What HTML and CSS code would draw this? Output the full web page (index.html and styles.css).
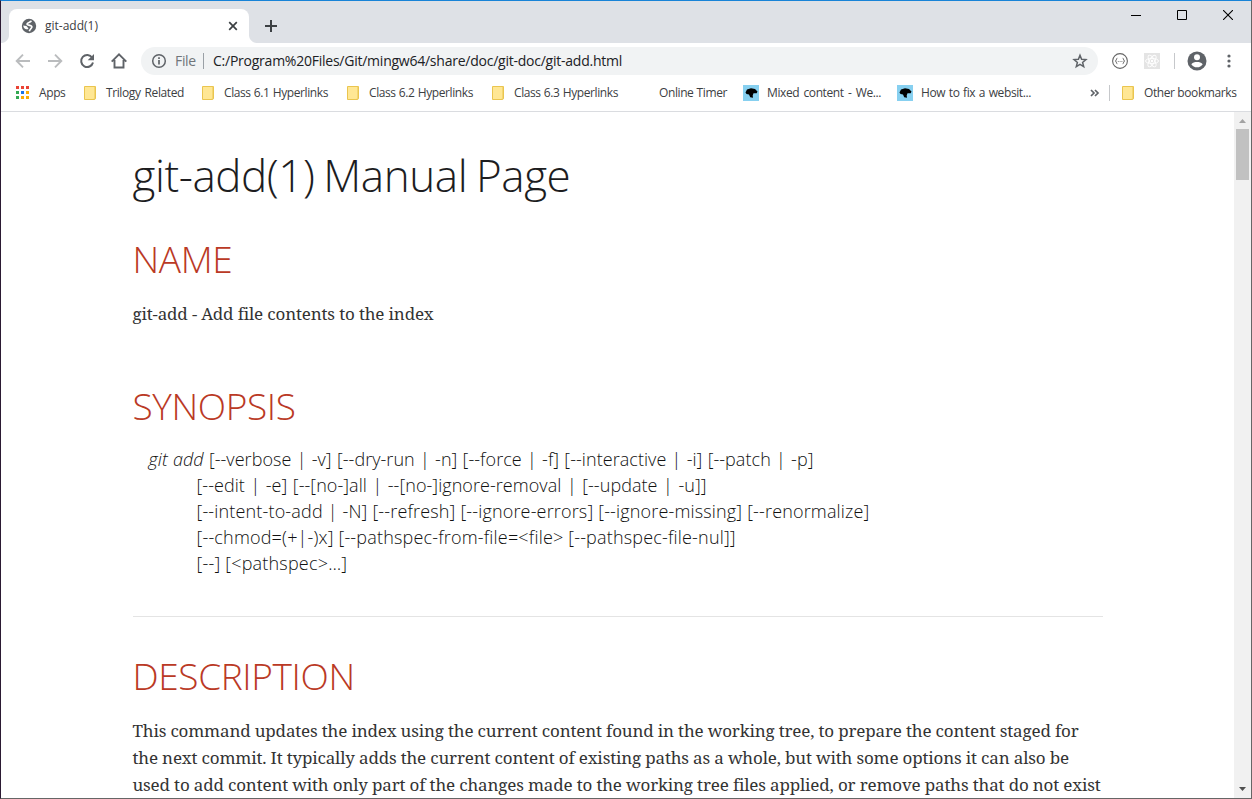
FILE: index.html
```html
<!DOCTYPE html>
<html lang="en">
<head>
<meta charset="utf-8">
<title>git-add(1)</title>
<link rel="stylesheet" href="styles.css">
</head>
<body>
<div class="window">
  <header class="tabstrip">
    <div class="tab">
      <svg class="globe" width="16" height="16" viewBox="0 0 16 16"><circle cx="8" cy="8" r="7.200" fill="#5f6368"/><path d="M10.300 2.700C9.600 4.600 6.300 4.300 6 6.100 5.900 7.300 9.800 6.800 10.800 8.400 11.500 9.800 9 10.700 8.300 13.300" fill="none" stroke="#fff" stroke-width="1.700"/><path d="M2.200 7.400 5.400 8C6.200 8.400 6.300 9.600 7.300 10L7.200 11.200C5 11.500 2.300 10.500 2.200 7.400Z" fill="#fff"/></svg>
      <span class="label tab-title">git-add(1)</span>
      <svg class="tab-close" width="16" height="16" viewBox="0 0 16 16"><path d="M4.200 4.200 11.800 11.800M11.800 4.200 4.200 11.800" stroke="#3c4043" stroke-width="1.700"/></svg>
    </div>
    <svg class="new-tab" width="14" height="14" viewBox="0 0 14 14"><path d="M7 1V13M1 7H13" stroke="#3c4043" stroke-width="2"/></svg>
    <div class="controls">
      <svg width="10" height="10" viewBox="0 0 10 10"><path d="M0 5.500H10" stroke="#000"/></svg>
      <svg width="10" height="10" viewBox="0 0 10 10"><path d="M.5.5H9.500V9.500H.5Z" fill="none" stroke="#000"/></svg>
      <svg width="10" height="10" viewBox="0 0 10 10"><path d="M0 0 10 10M10 0 0 10" stroke="#000" stroke-width="1.100"/></svg>
    </div>
  </header>

  <div class="toolbar">
    <nav class="nav">
      <svg width="16" height="16" viewBox="0 0 16 16"><path d="M15 8H2.500M8 1.700 1.700 8 8 14.300" fill="none" stroke="#babcbe" stroke-width="1.900"/></svg>
      <svg width="16" height="16" viewBox="0 0 16 16"><path d="M1 8H13.500M8 1.700 14.300 8 8 14.300" fill="none" stroke="#babcbe" stroke-width="1.900"/></svg>
      <svg width="16" height="16" viewBox="0 0 16 16"><path d="M13.200 4.700A6 6 0 1 0 14 9.500" fill="none" stroke="#5f6368" stroke-width="2"/><path d="M15 1V7.300H8.700Z" fill="#5f6368"/></svg>
      <svg width="16" height="16" viewBox="0 0 16 16"><path d="M.7 8.700 8 1.400 15.300 8.700M3.500 7V14.500H12.500V7" fill="none" stroke="#5f6368" stroke-width="1.900"/></svg>
    </nav>
    <div class="omnibox">
      <svg width="16" height="16" viewBox="0 0 16 16"><circle cx="8" cy="8" r="6.300" fill="none" stroke="#5f6368" stroke-width="1.500"/><path d="M8 7V11.500M8 4.300V5.900" stroke="#5f6368" stroke-width="1.700"/></svg>
      <span class="label scheme">File</span>
      <span class="omnibox-rule"></span>
      <span class="label url">C:/Program%20Files/Git/mingw64/share/doc/git-doc/git-add.html</span>
      <svg class="star" width="16" height="16" viewBox="0 0 16 16"><path d="M8 2.200 9.600 6.300 13.900 6.600 10.600 9.400 11.700 13.600 8 11.300 4.300 13.600 5.400 9.400 2.100 6.600 6.400 6.300Z" fill="none" stroke="#5f6368" stroke-width="1.500"/></svg>
    </div>
    <div class="extensions">
      <svg width="16" height="16" viewBox="0 0 16 16"><circle cx="8" cy="8" r="7.400" fill="none" stroke="#666" stroke-width="1.100"/><path d="M5.300 5.300C3.900 5.300 5 7.500 3.400 8 5 8.500 3.900 10.700 5.300 10.700M10.700 5.300C12.100 5.300 11 7.500 12.600 8 11 8.500 12.100 10.700 10.700 10.700" fill="none" stroke="#555"/><path d="M5.800 8.500H10.400" stroke="#888" stroke-dasharray="1 .8"/></svg>
      <svg width="16" height="16" viewBox="0 0 16 16"><path d="M0 0H16V16H0Z" fill="#e4e4e4"/><g fill="none" stroke="#fff" stroke-width=".9"><ellipse cx="8" cy="8" rx="6.500" ry="2.600"/><ellipse cx="8" cy="8" rx="6.500" ry="2.600" transform="rotate(60 8 8)"/><ellipse cx="8" cy="8" rx="6.500" ry="2.600" transform="rotate(120 8 8)"/></g><circle cx="8" cy="8" r="1.200" fill="#fff"/></svg>
      <span class="rule"></span>
      <svg class="avatar" width="20" height="20" viewBox="0 0 20 20"><circle cx="10" cy="10" r="9.500" fill="#5f6368"/><circle cx="10" cy="6.300" r="3" fill="#fff"/><path d="M4.300 13.200C5.200 11.500 8 10.900 10 10.900S14.800 11.500 15.700 13.200C14.500 15.100 12.400 16.300 10 16.300S5.500 15.100 4.300 13.200Z" fill="#fff"/></svg>
      <svg class="menu" width="4" height="14" viewBox="0 0 4 14"><g fill="#5f6368"><circle cx="2" cy="2" r="1.600"/><circle cx="2" cy="7" r="1.600"/><circle cx="2" cy="12" r="1.600"/></g></svg>
    </div>
  </div>

  <nav class="bookmarks">
    <a class="bookmark"><svg width="16" height="16" viewBox="0 0 16 16"><path d="M1 1h3v3H1zM6 1h3v3H6zM11 1h3v3h-3z" fill="#ea4335"/><path d="M1 6h3v3H1zM1 11h3v3H1z" fill="#34a853"/><path d="M6 6h3v3H6z" fill="#1a73e8"/><path d="M11 6h3v3h-3zM6 11h3v3H6zM11 11h3v3h-3z" fill="#fbab05"/></svg><span class="label w-apps">Apps</span></a>
    <a class="bookmark"><span class="folder"></span><span class="label w-trilogy">Trilogy Related</span></a>
    <a class="bookmark"><span class="folder"></span><span class="label w-class">Class 6.1 Hyperlinks</span></a>
    <a class="bookmark"><span class="folder"></span><span class="label w-class">Class 6.2 Hyperlinks</span></a>
    <a class="bookmark"><span class="folder"></span><span class="label w-class">Class 6.3 Hyperlinks</span></a>
    <a class="bookmark"><span class="blank"></span><span class="label w-timer">Online Timer</span></a>
    <a class="bookmark"><svg width="16" height="16" viewBox="0 0 16 16"><path d="M0 0H16V16H0Z" fill="#87d0f0"/><path d="M2.500 7.500 4 4.500 8 3.300 12 4 14.500 6.500 13.700 8.200 10.500 8.200 9.700 10.500 10 12.800 7.200 12.300 6 9.500 3.500 9Z"/></svg><span class="label w-mixed">Mixed content - We...</span></a>
    <a class="bookmark"><svg width="16" height="16" viewBox="0 0 16 16"><path d="M0 0H16V16H0Z" fill="#87d0f0"/><path d="M2.500 7.500 4 4.500 8 3.300 12 4 14.500 6.500 13.700 8.200 10.500 8.200 9.700 10.500 10 12.800 7.200 12.300 6 9.500 3.500 9Z"/></svg><span class="label w-how">How to fix a websit...</span></a>
    <svg class="overflow" width="10" height="8" viewBox="0 0 10 8"><path d="M1 1 4 4 1 7M5 1 8 4 5 7" fill="none" stroke="#5f6368" stroke-width="1.700"/></svg>
    <span class="rule"></span>
    <a class="bookmark other"><span class="folder"></span><span class="label w-other">Other bookmarks</span></a>
  </nav>

  <div class="viewport">
    <main class="page">
      <h1><span class="line h-title">git-add(1) Manual Page</span></h1>
      <h2>NAME</h2>
      <p><span class="line p-name">git-add - Add file contents to the index</span></p>
      <h2 class="synopsis-title">SYNOPSIS</h2>
      <div class="verse">
        <span class="line v1"><em>git add</em> [--verbose | -v] [--dry-run | -n] [--force | -f] [--interactive | -i] [--patch | -p]</span>
        <span class="line v2">[--edit | -e] [--[no-]all | --[no-]ignore-removal | [--update | -u]]</span>
        <span class="line v3">[--intent-to-add | -N] [--refresh] [--ignore-errors] [--ignore-missing] [--renormalize]</span>
        <span class="line v4">[--chmod=(+|-)x] [--pathspec-from-file=&lt;file&gt; [--pathspec-file-nul]]</span>
        <span class="line v5">[--] [&lt;pathspec&gt;…​]</span>
      </div>
      <hr>
      <h2>DESCRIPTION</h2>
      <p>
        <span class="line p1">This command updates the index using the current content found in the working tree, to prepare the content staged for</span>
        <span class="line p2">the next commit. It typically adds the current content of existing paths as a whole, but with some options it can also be</span>
        <span class="line p3">used to add content with only part of the changes made to the working tree files applied, or remove paths that do not exist</span>
      </p>
    </main>
    <aside class="scrollbar">
      <svg width="17" height="17" viewBox="0 0 17 17"><path d="M5 11H12L8.500 7Z" fill="#a3a3a3"/></svg>
      <span class="thumb"></span>
      <svg class="down" width="17" height="17" viewBox="0 0 17 17"><path d="M5 6H12L8.500 10Z" fill="#505050"/></svg>
    </aside>
  </div>
</div>
</body>
</html>
```
FILE: styles.css
```css
*, *::before, *::after { box-sizing: border-box; }
body { margin: 0; background: #fff; }
svg { display: block; flex: none; }

.window {
  width: 1252px;
  height: 799px;
  display: flex;
  flex-direction: column;
  overflow: hidden;
  border: 1px solid #666;
  border-top-color: #1883d7;
  border-left-color: #2b1a33;
  font: 12px/16px "Segoe UI", "Open Sans", sans-serif;
  color: #3c4043;
}
.label { white-space: nowrap; text-align: justify; text-align-last: justify; flex: none; letter-spacing: -0.35px; }

.tabstrip { height: 42px; flex: none; display: flex; background: #dee1e6; padding: 8px 0 0 8px; }
.tab { position: relative; width: 240px; height: 34px; background: #fff; border-radius: 8px 8px 0 0; display: flex; align-items: center; padding: 0 8px 0 12px; }
.tab::before, .tab::after { content: ""; position: absolute; bottom: 0; width: 8px; height: 8px; }
.tab::before { left: -8px; background: radial-gradient(circle at 0 0, #dee1e6 7.500px, #fff 8.500px); }
.tab::after { right: -8px; background: radial-gradient(circle at 100% 0, #dee1e6 7.500px, #fff 8.500px); }
.tab-title { width: 53px; margin-left: 8px; letter-spacing: 0; }
.tab-close { margin-left: auto; }
.new-tab { margin: 10px 0 0 15px; }
.controls { display: flex; gap: 36px; margin: 1px 18px 0 auto; }

.toolbar { height: 36px; flex: none; display: flex; align-items: center; }
.nav { display: flex; gap: 16px; padding-left: 14px; width: 140px; flex: none; }
.omnibox { width: 957px; height: 28px; border-radius: 14px; background: #f1f3f4; display: flex; align-items: center; padding: 0 10px; font-size: 14px; flex: none; }
.scheme { width: 21px; margin-left: 8px; color: #70757a; }
.omnibox-rule { width: 1px; height: 16px; background: #9aa0a6; margin: 0 9px 0 7px; }
.url { width: 410px; color: #202124; letter-spacing: -0.24px; }
.star { margin-left: auto; }
.extensions { display: flex; align-items: center; padding-left: 14px; gap: 16px; }
.extensions .rule { margin-left: -2px; }
.rule { width: 1px; height: 16px; background: #c6c8cb; flex: none; }
.avatar { margin-left: -4px; }
.menu { margin-left: 4px; }

.bookmarks { height: 33px; flex: none; display: flex; align-items: center; gap: 16px; padding: 0 14px 5px; border-bottom: 1px solid #dadce0; }
.bookmark { display: flex; align-items: center; gap: 8px; flex: none; }
.bookmark .label { padding-top: 1px; height: 18px; letter-spacing: -0.4px; }
.folder, .blank { width: 16px; height: 16px; flex: none; }
.folder { padding: 1px 2px; }
.folder::before { content: ""; display: block; width: 12px; height: 14px; background: #ffe794; border: 1px solid #eac54f; border-bottom-right-radius: 2px; box-shadow: inset -1px 0 #f4d671; }
.overflow { margin-left: 43px; }
.bookmarks .rule { margin-left: -7px; }
.other { margin-left: -6px; }
.w-apps { width: 27px; }
.w-trilogy { width: 78px; }
.w-class { width: 104px; margin-right: 1px; }
.w-timer { width: 68px; }
.w-mixed { width: 114px; }
.w-how { width: 110px; }
.w-other { width: 92px; }

.viewport { flex: 1; min-height: 0; display: flex; overflow: hidden; }
.page { flex: 1; padding: 37px 0 0 131.500px; overflow: hidden; }
.scrollbar { width: 17px; background: #f1f1f1; display: flex; flex-direction: column; align-items: center; }
.thumb { width: 13px; height: 51px; background: #c1c1c1; }
.down { margin-top: auto; }

h1, h2 { margin: 0; font-family: "Open Sans", sans-serif; font-weight: 300; line-height: 1.2; letter-spacing: -0.01em; word-spacing: -0.05em; }
h1 { font-size: 44px; color: #1d1d1f; height: 53px; margin-bottom: 35px; }
h2 { font-size: 37px; color: #ba3925; height: 44px; margin-bottom: 19px; }
.synopsis-title { margin-top: 57px; margin-bottom: 18px; }
.line { display: block; white-space: nowrap; text-align: justify; text-align-last: justify; }
.h-title { width: 437px; }
p { margin: 0; font: 17px/27px "Noto Serif", "DejaVu Serif", serif; color: #333; letter-spacing: -0.17px; }
.p-name { width: 301px; }
.p1 { width: 946px; }
.p2 { width: 936px; }
.p3 { width: 968px; }
.verse { font: 300 18px/26px "Open Sans", sans-serif; color: #111; padding-left: 64px; letter-spacing: 0.05px; }
.v1 { margin-left: -48px; width: 665px; }
.v2 { width: 510px; }
.v3 { width: 673px; letter-spacing: 0.16px; }
.v4 { width: 538px; letter-spacing: 0.18px; }
.v5 { width: 150px; letter-spacing: 0.2px; }
hr { width: 970px; height: 1px; border: 0; background: #e4e4e4; margin: 40px 0 37px; }
```
